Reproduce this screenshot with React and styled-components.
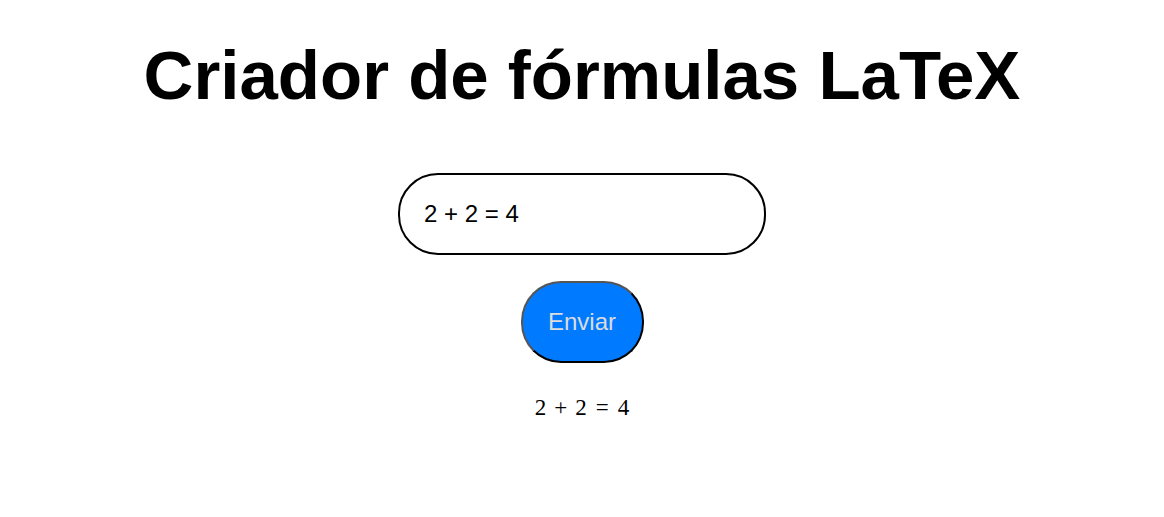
import styled, { createGlobalStyle } from "styled-components";

const GlobalStyle = createGlobalStyle`
  body {
    margin: 0;
    font-family: "Liberation Sans", Arial, sans-serif;
    background: #ffffff;
  }
`;

export default function App() {
  return (
    <>
      <GlobalStyle />
      <Page>
        <Title>Criador de fórmulas LaTeX</Title>

        <FormulaForm onSubmit={(e) => e.preventDefault()}>
          <FormulaInput type="text" defaultValue="2 + 2 = 4" />
          <SendButton type="submit">Enviar</SendButton>
        </FormulaForm>

        <MathOutput>
          <span>2</span>
          <MathOp>+</MathOp>
          <span>2</span>
          <MathRel>=</MathRel>
          <span>4</span>
        </MathOutput>
      </Page>
    </>
  );
}

const Page = styled.main`
  display: flex;
  flex-direction: column;
  align-items: center;
  padding-top: 36px;
`;

const Title = styled.h1`
  margin: 0 0 58px;
  font-size: 69px;
  font-weight: 700;
  line-height: 1.15;
  color: #000;
`;

const FormulaForm = styled.form`
  display: flex;
  flex-direction: column;
  align-items: center;
  gap: 26px;
`;

const FormulaInput = styled.input`
  box-sizing: border-box;
  width: 368px;
  height: 82px;
  padding: 0 24px;
  border: 2px solid #000;
  border-radius: 40px;
  font-family: "Liberation Sans", Arial, sans-serif;
  font-size: 24px;
  color: #000;
  outline: none;
`;

const SendButton = styled.button`
  box-sizing: border-box;
  width: 123px;
  height: 82px;
  border: 2px solid;
  border-color: #555 #000 #000 #555;
  border-radius: 40px;
  background: #007bff;
  color: #dcdcdc;
  font-family: "Liberation Sans", Arial, sans-serif;
  font-size: 24px;
  cursor: pointer;
`;

const MathOutput = styled.div`
  display: flex;
  align-items: baseline;
  margin-top: 32px;
  font-family: "Liberation Serif", "DejaVu Serif", serif;
  font-size: 23px;
  color: #000;
`;

const MathOp = styled.span`
  margin: 0 8px;
`;

const MathRel = styled.span`
  margin: 0 9px;
`;
